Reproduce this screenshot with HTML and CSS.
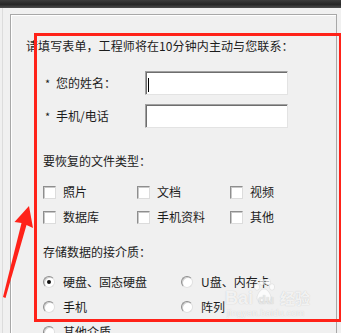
FILE: index.html
```html
<!DOCTYPE html>
<html lang="zh-CN">
<head>
<meta charset="utf-8">
<title>表单</title>
<link rel="stylesheet" href="styles.css">
</head>
<body>
<div class="topbar"></div>
<div class="window">
  <div class="frame">
    <p class="intro">请填写表单，工程师将在10分钟内主动与您联系：</p>
    <div class="fields">
      <div class="field">
        <span class="req">*</span><span class="flabel">您的姓名：</span>
        <span class="input"><span class="caret"></span></span>
      </div>
      <div class="field">
        <span class="req">*</span><span class="flabel">手机/电话</span>
        <span class="input"></span>
      </div>
    </div>
    <p class="heading">要恢复的文件类型：</p>
    <div class="checks">
      <label class="opt"><span class="cb"></span>照片</label>
      <label class="opt"><span class="cb"></span>文档</label>
      <label class="opt"><span class="cb"></span>视频</label>
      <label class="opt"><span class="cb"></span>数据库</label>
      <label class="opt"><span class="cb"></span>手机资料</label>
      <label class="opt"><span class="cb"></span>其他</label>
    </div>
    <p class="heading heading2">存储数据的接介质：</p>
    <div class="radios">
      <label class="opt"><span class="rb on"></span>硬盘、固态硬盘</label>
      <label class="opt"><span class="rb"></span>U盘、内存卡</label>
      <label class="opt"><span class="rb"></span>手机</label>
      <label class="opt"><span class="rb"></span>阵列</label>
      <label class="opt"><span class="rb"></span>其他介质</label>
    </div>
  </div>
</div>

<div class="redbox"></div>
<svg class="arrow" width="40" height="100" viewBox="0 200 40 100">
  <polygon points="29,206 33,228 26.5,225 5.5,298 3,297 21.5,223 14.5,222" fill="#ff2219"/>
</svg>
<div class="watermark">
  <div class="wm-top"><span class="wm-bai">Bai</span><svg class="paw" width="22" height="26" viewBox="0 0 22 26">
    <g fill="rgba(255,255,255,0.7)" stroke="rgba(160,160,160,0.3)" stroke-width="0.6">
      <ellipse cx="4" cy="9" rx="2.6" ry="3.2"/>
      <ellipse cx="9" cy="4" rx="2.6" ry="3.2"/>
      <ellipse cx="15" cy="4" rx="2.6" ry="3.2"/>
      <ellipse cx="19" cy="9" rx="2.6" ry="3.2"/>
      <path d="M11 11 C7 11 4 17 4 20 C4 24 8 24 11 23 C14 24 18 24 18 20 C18 17 15 11 11 11 Z"/>
    </g>
  </svg><span class="wm-du">du</span><span class="wm-jy">经验</span></div>
  <div class="wm-url">jingyan.baidu.com</div>
</div>
</body>
</html>
```
FILE: styles.css
```css
html, body {
  margin: 0;
  padding: 0;
}
body {
  width: 341px;
  height: 333px;
  overflow: hidden;
  background: #f0f0f0;
  font-family: "Noto Sans CJK SC", "Noto Sans", sans-serif;
  font-size: 12px;
  color: #1c1c1c;
  position: relative;
}
.topbar {
  height: 8px;
  background: linear-gradient(to bottom, #3c3c3c 0%, #262626 55%, #4e4e4e 100%);
}
.window {
  height: 325px;
  margin-left: 2px;
  border-left: 1px solid #dcdcdc;
  padding-top: 6px;
  box-sizing: border-box;
  overflow: hidden;
}
.frame {
  margin-left: 7px;
  margin-right: 4px;
  height: 319px;
  box-sizing: border-box;
  overflow: hidden;
  border-left: 1px solid #a8a8a8;
  border-top: 1px solid #a8a8a8;
  border-right: 1px solid #a8a8a8;
  box-shadow: inset 1px 1px 0 #ffffff;
  padding-left: 15px;
}
p {
  margin: 0;
}
.intro {
  margin-top: 23px;
  line-height: 16px;
  letter-spacing: 0.1px;
  white-space: nowrap;
}
.fields {
  margin-top: 17px;
  padding-left: 17px;
  display: flex;
  flex-direction: column;
  gap: 9px;
}
.field {
  height: 24px;
  display: flex;
  align-items: center;
}
.req {
  width: 13px;
  padding-left: 2px;
  box-sizing: border-box;
  font-size: 11px;
}
.flabel {
  width: 89px;
  line-height: 16px;
  white-space: nowrap;
}
.input {
  width: 143px;
  height: 24px;
  box-sizing: border-box;
  background: #ffffff;
  border: 1px solid;
  border-color: #a0a0a0 #e3e3e3 #e3e3e3 #a0a0a0;
  box-shadow: inset 1px 1px 0 #6e6e6e;
  position: relative;
}
.caret {
  position: absolute;
  left: 2px;
  top: 6px;
  width: 1px;
  height: 14px;
  background: #000;
}
.heading {
  margin-top: 25px;
  padding-left: 17px;
  line-height: 16px;
  white-space: nowrap;
}
.heading2 {
  margin-top: 19px;
}
.checks {
  margin-top: 15px;
  padding-left: 17px;
  display: grid;
  grid-template-columns: 94px 93px auto;
  row-gap: 9px;
}
.radios {
  margin-top: 14px;
  padding-left: 17px;
  display: grid;
  grid-template-columns: 138px auto;
  row-gap: 9px;
}
.opt {
  height: 16px;
  line-height: 16px;
  display: flex;
  align-items: center;
  gap: 7px;
  white-space: nowrap;
}
.cb {
  width: 13px;
  height: 13px;
  box-sizing: border-box;
  background: #fff;
  border: 1px solid;
  border-color: #8e8e8e #dcdcdc #dcdcdc #8e8e8e;
  box-shadow: inset 1px 1px 0 #c8c8c8;
  flex: none;
}
.rb {
  width: 12px;
  height: 12px;
  box-sizing: border-box;
  border-radius: 50%;
  background: #fff;
  border: 1px solid;
  border-color: #8e8e8e #e0e0e0 #e0e0e0 #8e8e8e;
  box-shadow: inset 1px 1px 0 #cfcfcf;
  flex: none;
  margin-right: 1px;
  position: relative;
}
.rb.on::after {
  content: "";
  position: absolute;
  left: 3px;
  top: 3px;
  width: 4px;
  height: 4px;
  border-radius: 50%;
  background: #111;
}
.redbox {
  position: absolute;
  left: 34px;
  top: 33px;
  width: 307px;
  height: 289px;
  box-sizing: border-box;
  border: 3px solid #ff2219;
  border-right-width: 2px;
  pointer-events: none;
}
.arrow {
  position: absolute;
  left: 0;
  top: 200px;
}
.watermark {
  position: absolute;
  left: 225px;
  top: 277px;
  color: rgba(255, 255, 255, 0.8);
  text-shadow: 0 0 1px rgba(120, 120, 120, 0.4);
  font-family: "Liberation Sans", Arial, sans-serif;
}
.wm-top {
  display: flex;
  align-items: flex-end;
  height: 30px;
}
.wm-bai {
  font-size: 18px;
  font-weight: bold;
  line-height: 18px;
}
.paw {
  margin-bottom: 3px;
}
.wm-du {
  font-size: 13px;
  font-weight: bold;
  line-height: 14px;
  margin-left: -17px;
  margin-right: 6px;
  color: rgba(235, 235, 235, 0.9);
}
.wm-jy {
  font-family: "Noto Sans CJK SC", sans-serif;
  font-size: 15px;
  line-height: 18px;
  font-weight: bold;
}
.wm-url {
  font-size: 9px;
  line-height: 10px;
  margin-left: 2px;
  margin-top: 1px;
  letter-spacing: 0.3px;
}
```
